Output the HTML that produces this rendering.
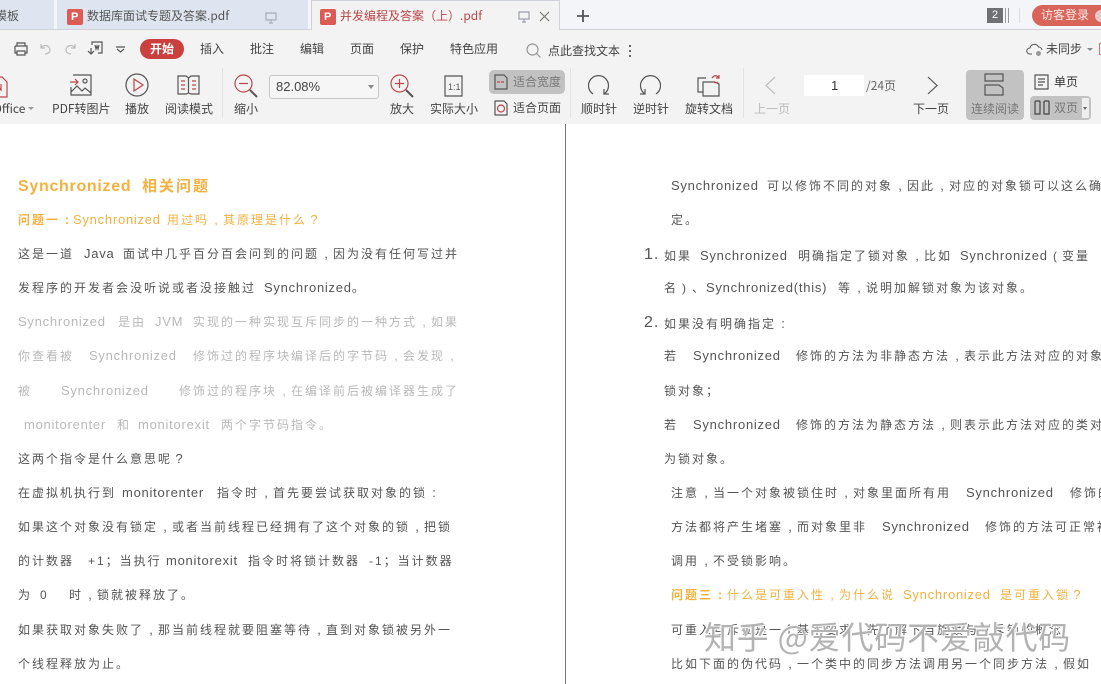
<!DOCTYPE html>
<html lang="zh"><head><meta charset="utf-8"><title>PDF</title>
<style>
html,body{margin:0;padding:0;background:#fff}
#p{position:relative;width:1101px;height:684px;overflow:hidden;background:#fff;font-family:"Liberation Sans","Noto Sans CJK SC",sans-serif}
.a{position:absolute}
.t{position:absolute;white-space:pre;font-size:12px;line-height:16px;height:16px;letter-spacing:2px;color:#555}
.t.e{font-size:13px;letter-spacing:.75px}
.t s{display:inline-block;width:14px;text-align:center;text-decoration:none;letter-spacing:0;font-family:"Liberation Sans",sans-serif;font-size:13px}
.g{color:#b9b9b9}
.o{color:#f4b13f}
.b{font-weight:bold}
.u{position:absolute;white-space:pre;font-size:12px;line-height:16px;color:#444;font-family:"Noto Sans CJK SC","Liberation Sans",sans-serif}
svg{position:absolute;overflow:visible;fill:none;stroke:#555;stroke-width:1.2}
.r{stroke:#b9474a}
</style></head><body><div id="p">

<!-- tab bar -->
<div class="a" style="left:0;top:0;width:1101px;height:30px;background:#f4f5f8;border-bottom:1px solid #cfd2d9;box-sizing:border-box"></div>
<div class="a" style="left:0;top:0;width:54px;height:29px;background:#dfe5f0"></div>
<div class="a" style="left:57px;top:0;width:251px;height:29px;background:#dfe5f0"></div>
<div class="a" style="left:311px;top:0;width:249px;height:30px;background:#f3f3f3;border:1px solid #cfd2d9;border-width:1px 1px 0 1px;box-sizing:border-box"></div>
<div class="u" style="left:-5px;top:8px;color:#555">模板</div>
<div class="a" style="left:67px;top:9px;width:16px;height:16px;background:#dc5b55;border-radius:2px"></div>
<div class="a" style="left:71px;top:10px;color:#fff;font-size:11px;line-height:14px;font-weight:bold">P</div>
<div class="u" style="left:87px;top:8px;color:#555">数据库面试专题及答案.pdf</div>
<svg style="left:265px;top:12px" width="12" height="12" viewBox="0 0 12 12"><path d="M1 1h10v7H1zM6 8v3M4 11h4" stroke="#a7adb8"/></svg>
<div class="a" style="left:320px;top:9px;width:16px;height:16px;background:#dc5b55;border-radius:2px"></div>
<div class="a" style="left:324px;top:10px;color:#fff;font-size:11px;line-height:14px;font-weight:bold">P</div>
<div class="u" style="left:340px;top:8px;color:#b9474a">并发编程及答案（上）.pdf</div>
<svg style="left:518px;top:11px" width="12" height="12" viewBox="0 0 12 12"><path d="M1 1h10v7H1zM6 8v3M4 11h4" stroke="#9aa0aa"/></svg>
<svg style="left:539px;top:11px" width="11" height="11" viewBox="0 0 11 11"><path d="M1 1l9 9M10 1l-9 9" stroke="#777"/></svg>
<svg style="left:577px;top:10px" width="12" height="12" viewBox="0 0 12 12"><path d="M0 6h12M6 0v12" stroke="#555" stroke-width="1.8"/></svg>
<div class="a" style="left:987px;top:8px;width:16px;height:15px;background:#6f7175;color:#fff;font-size:11px;line-height:15px;text-align:center">2</div>
<div class="a" style="left:1005px;top:8px;width:2px;height:15px;border-left:1px solid #999;border-right:1px solid #999"></div>
<div class="a" style="left:1019px;top:8px;width:1px;height:15px;background:#dcdcdc"></div>
<div class="a" style="left:1032px;top:5px;width:80px;height:21px;background:#d9655a;border-radius:11px"></div>
<div class="u" style="left:1041px;top:7px;color:#fbe9e6">访客登录</div>
<div class="a" style="left:1095px;top:10px;width:12px;height:12px;background:#eac9c4;border-radius:6px"></div>

<!-- toolbar -->
<div class="a" style="left:0;top:30px;width:1101px;height:94px;background:#f3f3f3"></div>
<svg style="left:13px;top:41px" width="16" height="16" viewBox="0 0 16 16"><path d="M4 5V2h8v3M2 5h12v7h-2M4 12H2V5M4 10h8v4H4z"/></svg>
<svg style="left:38px;top:42px" width="14" height="14" viewBox="0 0 14 14"><path d="M3 2v4h4M3 6c2-4 9-3 9 2 0 3-3 4-5 4" stroke="#bbb"/></svg>
<svg style="left:64px;top:42px" width="14" height="14" viewBox="0 0 14 14"><path d="M11 2v4H7M11 6C9 2 2 3 2 8c0 3 3 4 5 4" stroke="#bbb"/></svg>
<svg style="left:87px;top:41px" width="16" height="16" viewBox="0 0 16 16"><path d="M5 4V1h10v11h-4M1 10l3 3 3-3M4 13V7M8 4l1 4 1-3 1 3 1-4"/></svg>
<svg style="left:116px;top:46px" width="9" height="7" viewBox="0 0 9 7"><path d="M0 1h9M1 3l3.500 3L8 3"/></svg>
<div class="a" style="left:140px;top:39px;width:44px;height:20px;background:#c9403f;border-radius:10px"></div>
<div class="u b" style="left:150px;top:41px;color:#fff;font-weight:bold">开始</div>
<div class="u" style="left:200px;top:41px">插入</div>
<div class="u" style="left:250px;top:41px">批注</div>
<div class="u" style="left:300px;top:41px">编辑</div>
<div class="u" style="left:350px;top:41px">页面</div>
<div class="u" style="left:400px;top:41px">保护</div>
<div class="u" style="left:450px;top:41px">特色应用</div>
<svg style="left:526px;top:43px" width="15" height="15" viewBox="0 0 15 15"><circle cx="6.500" cy="6.500" r="5.500" stroke="#999"/><path d="M10.500 10.500l4 4" stroke="#999"/></svg>
<div class="u" style="left:548px;top:43px">点此查找文本</div>
<div class="a" style="left:629px;top:45px;width:2px;height:2px;background:#666;box-shadow:0 5px 0 #666,0 10px 0 #666"></div>
<svg style="left:1026px;top:43px" width="18" height="14" viewBox="0 0 18 14"><path d="M6 11H3.500A3 3 0 0 1 4 5a4.500 4.500 0 0 1 8.500-1A3.500 3.500 0 0 1 16 7" stroke-width="1"/><circle cx="12.500" cy="10.500" r="2.500" fill="#999" stroke="none"/></svg>
<div class="u" style="left:1046px;top:41px">未同步</div>
<div class="a" style="left:1087px;top:48px;border:3px solid transparent;border-top:3px solid #888"></div>
<div class="a" style="left:1099px;top:43px;width:4px;height:12px;border:1px solid #c77;box-sizing:border-box"></div>

<!-- ribbon icons -->
<svg style="left:-8px;top:76px" width="16" height="22" viewBox="0 0 16 22"><path d="M0 1h10l5 5v15H0" class="r"/><path d="M4 14V8l5 6V8" class="r"/></svg>
<div class="u" style="left:-7px;top:101px">Office</div>
<div class="a" style="left:28px;top:107px;border:3px solid transparent;border-top:3px solid #999"></div>
<svg style="left:70px;top:74px" width="22" height="22" viewBox="0 0 22 22"><path d="M3 1h18v20H1v-8M1 18l6-6 5 5 3-3 6 5"/><circle cx="15" cy="7" r="2"/><path class="r" d="M0 8h8M5 5l3 3-3 3"/></svg>
<div class="u" style="left:52px;top:101px">PDF转图片</div>
<svg style="left:125px;top:73px" width="24" height="24" viewBox="0 0 24 24"><circle cx="12" cy="12" r="11"/><path class="r" d="M9 6l9 6-9 6z"/></svg>
<div class="u" style="left:125px;top:101px">播放</div>
<svg style="left:177px;top:75px" width="23" height="20" viewBox="0 0 23 20"><path d="M1 1h8l2.500 2L14 1h8v18h-8l-2.500-1L9 19H1zM11.500 3v15"/><path class="r" d="M4 6h4M4 10h4M4 14h4M15 6h4M15 10h4M15 14h4"/></svg>
<div class="u" style="left:165px;top:101px">阅读模式</div>
<div class="a" style="left:222px;top:68px;width:1px;height:50px;background:#e3e3e3"></div>
<svg style="left:234px;top:74px" width="24" height="24" viewBox="0 0 24 24"><circle class="r" cx="9.500" cy="9.500" r="8.500"/><path class="r" d="M5 9.500h9"/><path d="M16 16l7 7" stroke-width="2"/></svg>
<div class="u" style="left:234px;top:101px">缩小</div>
<div class="a" style="left:269px;top:75px;width:110px;height:24px;background:#f6f6f6;border:1px solid #c6c6c6;border-radius:3px;box-sizing:border-box"></div>
<div class="u" style="left:276px;top:79px;font-family:'Liberation Sans',sans-serif;font-size:13px">82.08%</div>
<div class="a" style="left:368px;top:85px;border:3px solid transparent;border-top:4px solid #888"></div>
<svg style="left:390px;top:74px" width="24" height="24" viewBox="0 0 24 24"><circle class="r" cx="9.500" cy="9.500" r="8.500"/><path class="r" d="M5 9.500h9M9.500 5v9"/><path d="M16 16l7 7" stroke-width="2"/></svg>
<div class="u" style="left:390px;top:101px">放大</div>
<svg style="left:444px;top:75px" width="19" height="22" viewBox="0 0 19 22"><path d="M1 1h17v20H1z"/><text x="4" y="15" font-size="9" fill="#555" stroke="none" font-family="Liberation Sans">1:1</text></svg>
<div class="u" style="left:430px;top:101px">实际大小</div>
<div class="a" style="left:489px;top:70px;width:76px;height:24px;background:#c2c2c2;border-radius:5px"></div>
<svg style="left:494px;top:74px" width="14" height="16" viewBox="0 0 14 16"><path d="M1 1h9l3 3v11H1z"/><path class="r" d="M3 8h8" stroke-dasharray="3 1"/></svg>
<div class="u" style="left:513px;top:74px;color:#777">适合宽度</div>
<svg style="left:494px;top:100px" width="14" height="16" viewBox="0 0 14 16"><path d="M1 1h9l3 3v11H1z"/><circle class="r" cx="7" cy="8.500" r="3.500"/></svg>
<div class="u" style="left:513px;top:100px">适合页面</div>
<div class="a" style="left:570px;top:68px;width:1px;height:50px;background:#e3e3e3"></div>
<svg style="left:587px;top:74px" width="23" height="22" viewBox="0 0 23 22"><path d="M17 20a10 10 0 1 0-11 0"/><path d="M17 15v5h5"/></svg>
<div class="u" style="left:581px;top:101px">顺时针</div>
<svg style="left:639px;top:74px" width="23" height="22" viewBox="0 0 23 22"><path d="M6 20a10 10 0 1 1 11 0"/><path d="M6 15v5H1"/></svg>
<div class="u" style="left:633px;top:101px">逆时针</div>
<svg style="left:697px;top:73px" width="25" height="25" viewBox="0 0 25 25"><path d="M6 19H1V5h8"/><path d="M6 9h12l4 2v12H6z"/><path class="r" d="M15 5c2-3 5-3 7 0M22 2v3h-3M21 9c-1 1-3 1-4 0"/></svg>
<div class="u" style="left:685px;top:101px">旋转文档</div>
<div class="a" style="left:743px;top:68px;width:1px;height:50px;background:#e3e3e3"></div>
<svg style="left:765px;top:76px" width="11" height="19" viewBox="0 0 11 19"><path d="M10 1L1 9.500l9 8.500" stroke="#bbb"/></svg>
<div class="u" style="left:754px;top:101px;color:#bbb">上一页</div>
<div class="a" style="left:804px;top:75px;width:60px;height:21px;background:#fff"></div>
<div class="u" style="left:831px;top:78px;font-family:'Liberation Sans',sans-serif;font-size:13px;color:#333">1</div>
<div class="u" style="left:866px;top:78px;color:#666">/24页</div>
<svg style="left:927px;top:76px" width="11" height="19" viewBox="0 0 11 19"><path d="M1 1l9 8.500L1 18"/></svg>
<div class="u" style="left:913px;top:101px">下一页</div>
<div class="a" style="left:966px;top:70px;width:58px;height:50px;background:#c2c2c2;border-radius:4px"></div>
<svg style="left:984px;top:73px" width="20" height="23" viewBox="0 0 20 23"><path d="M1 1h18v7H1zM1 12h14l4 3v7H1z"/></svg>
<div class="u" style="left:971px;top:101px;color:#777">连续阅读</div>
<svg style="left:1034px;top:74px" width="15" height="16" viewBox="0 0 15 16"><path d="M1 1h13v14H1zM4 5h7M4 8h7M4 11h5"/></svg>
<div class="u" style="left:1054px;top:74px;color:#333">单页</div>
<div class="a" style="left:1030px;top:96px;width:61px;height:24px;background:#c2c2c2;border-radius:4px"></div>
<div class="a" style="left:1082px;top:98px;width:7px;height:20px;background:#eee"></div>
<div class="a" style="left:1083px;top:107px;border:2.500px solid transparent;border-top:3px solid #666"></div>
<svg style="left:1034px;top:100px" width="16" height="15" viewBox="0 0 16 15"><path d="M1 2a1 1 0 0 1 1-1h3a1 1 0 0 1 1 1v12H1zM10 14V2a1 1 0 0 1 1-1h3a1 1 0 0 1 1 1v12z" stroke="#444"/></svg>
<div class="u" style="left:1054px;top:100px;color:#777">双页</div>

<!-- page divider -->
<div class="a" style="left:565px;top:124px;width:1px;height:560px;background:#777"></div>

<!-- left page -->
<div class="t o b" style="left:18px;top:178px;font-size:16px;line-height:18px;height:18px;letter-spacing:.7px">Synchronized</div>
<div class="t o b" style="left:142px;top:178px;font-size:15px;line-height:18px;height:18px">相关问题</div>
<div class="t o b" style="left:18px;top:212px">问题一<s>:</s></div>
<div class="t e o" style="left:73px;top:212px">Synchronized</div>
<div class="t o" style="left:167px;top:212px">用过吗<s>,</s>其原理是什么<s>?</s></div>

<div class="t" style="left:18px;top:246px">这是一道</div>
<div class="t e" style="left:84px;top:246px">Java</div>
<div class="t" style="left:123px;top:246px">面试中几乎百分百会问到的问题<s>,</s>因为没有任何写过并</div>
<div class="t" style="left:18px;top:280px">发程序的开发者会没听说或者没接触过</div>
<div class="t e" style="left:264px;top:280px">Synchronized。</div>

<div class="t e g" style="left:18px;top:314px">Synchronized</div>
<div class="t g" style="left:118px;top:314px">是由</div>
<div class="t e g" style="left:155px;top:314px">JVM</div>
<div class="t g" style="left:193px;top:314px">实现的一种实现互斥同步的一种方式<s>,</s>如果</div>
<div class="t g" style="left:18px;top:348px">你查看被</div>
<div class="t e g" style="left:89px;top:348px">Synchronized</div>
<div class="t g" style="left:193px;top:348px">修饰过的程序块编译后的字节码<s>,</s>会发现<s>,</s></div>
<div class="t g" style="left:18px;top:383px">被</div>
<div class="t e g" style="left:61px;top:383px">Synchronized</div>
<div class="t g" style="left:179px;top:383px">修饰过的程序块<s>,</s>在编译前后被编译器生成了</div>
<div class="t e g" style="left:24px;top:417px">monitorenter</div>
<div class="t g" style="left:117px;top:417px">和</div>
<div class="t e g" style="left:138px;top:417px">monitorexit</div>
<div class="t g" style="left:221px;top:417px">两个字节码指令。</div>

<div class="t" style="left:18px;top:451px">这两个指令是什么意思呢<s>?</s></div>
<div class="t" style="left:18px;top:485px">在虚拟机执行到</div>
<div class="t e" style="left:122px;top:485px">monitorenter</div>
<div class="t" style="left:217px;top:485px">指令时<s>,</s>首先要尝试获取对象的锁<s>:</s></div>
<div class="t" style="left:18px;top:519px">如果这个对象没有锁定<s>,</s>或者当前线程已经拥有了这个对象的锁<s>,</s>把锁</div>
<div class="t" style="left:18px;top:553px">的计数器</div>
<div class="t" style="left:88px;top:553px">+1；当执行</div>
<div class="t e" style="left:166px;top:553px">monitorexit</div>
<div class="t" style="left:248px;top:553px">指令时将锁计数器</div>
<div class="t" style="left:369px;top:553px">-1；当计数器</div>
<div class="t" style="left:18px;top:587px">为</div>
<div class="t" style="left:40px;top:587px">0</div>
<div class="t" style="left:69px;top:587px">时<s>,</s>锁就被释放了。</div>
<div class="t" style="left:18px;top:622px">如果获取对象失败了<s>,</s>那当前线程就要阻塞等待<s>,</s>直到对象锁被另外一</div>
<div class="t" style="left:18px;top:656px">个线程释放为止。</div>

<!-- right page -->
<div class="t e" style="left:671px;top:178px">Synchronized</div>
<div class="t" style="left:767px;top:178px">可以修饰不同的对象<s>,</s>因此<s>,</s>对应的对象锁可以这么确</div>
<div class="t" style="left:671px;top:212px">定。</div>
<div class="t" style="left:644px;top:247px;font-size:16px;letter-spacing:1px">1.</div>
<div class="t" style="left:664px;top:248px">如果</div>
<div class="t e" style="left:700px;top:248px">Synchronized</div>
<div class="t" style="left:798px;top:248px">明确指定了锁对象<s>,</s>比如</div>
<div class="t e" style="left:960px;top:248px">Synchronized</div>
<div class="t" style="left:1053px;top:248px">(</div>
<div class="t" style="left:1062px;top:248px">变量</div>
<div class="t" style="left:664px;top:280px">名</div>
<div class="t" style="left:682px;top:280px">)</div>
<div class="t" style="left:692px;top:280px">、</div>
<div class="t e" style="left:706px;top:280px">Synchronized(this)</div>
<div class="t" style="left:838px;top:280px">等<s>,</s>说明加解锁对象为该对象。</div>
<div class="t" style="left:644px;top:315px;font-size:16px;letter-spacing:1px">2.</div>
<div class="t" style="left:664px;top:316px">如果没有明确指定<s>:</s></div>
<div class="t" style="left:664px;top:348px">若</div>
<div class="t e" style="left:693px;top:348px">Synchronized</div>
<div class="t" style="left:796px;top:348px">修饰的方法为非静态方法<s>,</s>表示此方法对应的对象</div>
<div class="t" style="left:664px;top:383px">锁对象；</div>
<div class="t" style="left:664px;top:417px">若</div>
<div class="t e" style="left:693px;top:417px">Synchronized</div>
<div class="t" style="left:796px;top:417px">修饰的方法为静态方法<s>,</s>则表示此方法对应的类对</div>
<div class="t" style="left:664px;top:451px">为锁对象。</div>
<div class="t" style="left:671px;top:485px">注意<s>,</s>当一个对象被锁住时<s>,</s>对象里面所有用</div>
<div class="t e" style="left:966px;top:485px">Synchronized</div>
<div class="t" style="left:1070px;top:485px">修饰的</div>
<div class="t" style="left:671px;top:519px">方法都将产生堵塞<s>,</s>而对象里非</div>
<div class="t e" style="left:882px;top:519px">Synchronized</div>
<div class="t" style="left:985px;top:519px">修饰的方法可正常被</div>
<div class="t" style="left:671px;top:553px">调用<s>,</s>不受锁影响。</div>
<div class="t o b" style="left:671px;top:587px">问题三<s>:</s></div>
<div class="t o" style="left:727px;top:587px">什么是可重入性<s>,</s>为什么说</div>
<div class="t e o" style="left:903px;top:587px">Synchronized</div>
<div class="t o" style="left:1000px;top:587px">是可重入锁<s>?</s></div>
<div class="t" style="left:671px;top:622px">可重入互斥锁是一个基本要求<s>,</s>先了解下自旋锁与互斥锁的概念</div>
<div class="t" style="left:671px;top:656px">比如下面的伪代码<s>,</s>一个类中的同步方法调用另一个同步方法<s>,</s>假如</div>

<!-- watermark -->
<div class="a" style="left:704px;top:615px;white-space:pre;font-family:'Noto Sans CJK SC',sans-serif;font-size:32px;line-height:42px;letter-spacing:.8px;color:rgba(150,150,150,.72);text-shadow:0 0 1px #fff,1px 1px 0 rgba(255,255,255,.9),-1px -1px 0 rgba(255,255,255,.9)">知乎 @爱代码不爱敲代码</div>

</div></body></html>
